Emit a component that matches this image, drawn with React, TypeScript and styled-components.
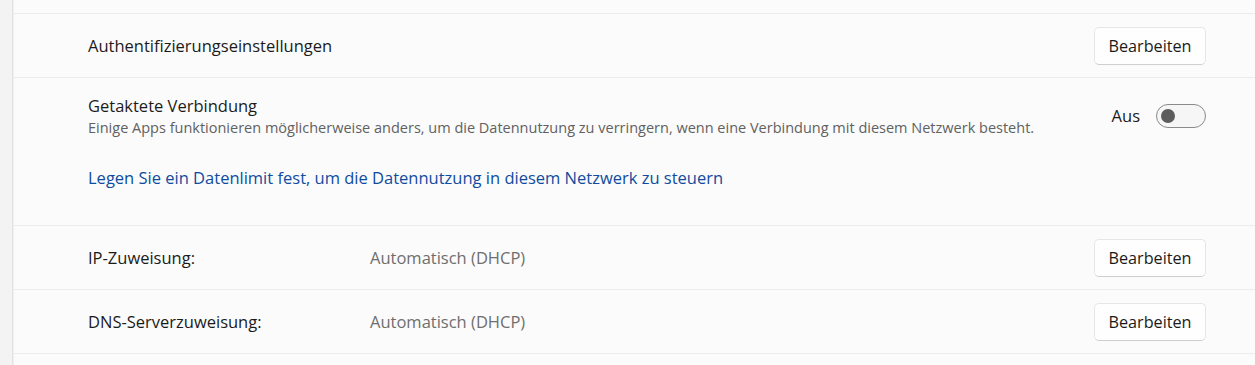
import styled, { createGlobalStyle } from 'styled-components'

const GlobalStyle = createGlobalStyle`
  html, body {
    margin: 0;
    padding: 0;
    background: #fbfbfb;
    font-family: "Open Sans", "Noto Sans", sans-serif;
    color: #1b1b1b;
  }
`

const Page = styled.div`
  display: flex;
  width: 1255px;
  height: 365px;
  overflow: hidden;
`

const Sidebar = styled.div`
  width: 12px;
  flex-shrink: 0;
  background: #f3f3f3;
  border-right: 1px solid #e3e3e3;
  box-shadow: 1px 0 0 #efefef;
`

const List = styled.div`
  flex: 1;
  display: flex;
  flex-direction: column;
  margin-left: 1px;
`

const Row = styled.div<{ height: number }>`
  display: flex;
  align-items: center;
  height: ${({ height }) => height}px;
  padding: 0 49px 0 74px;
  border-bottom: 1px solid #ececec;
  flex-shrink: 0;
`

const Spacer = styled.div<{ height: number }>`
  height: ${({ height }) => height}px;
  border-bottom: 1px solid #ececec;
  flex-shrink: 0;
`

const ExpandedRow = styled.div`
  display: flex;
  flex-direction: column;
  box-sizing: border-box;
  height: 148px;
  padding: 17px 49px 0 74px;
  border-bottom: 1px solid #ececec;
  flex-shrink: 0;
`

const TopLine = styled.div`
  display: flex;
  align-items: flex-start;
`

const TextBlock = styled.div`
  flex: 1;
  display: flex;
  flex-direction: column;
`

const Label = styled.span<{ width?: number }>`
  font-size: 16.5px;
  line-height: 22px;
  color: #1b1b1b;
  ${({ width }) => (width ? `width: ${width}px; flex-shrink: 0;` : 'flex: 1;')}
`

const Description = styled.span`
  font-size: 14.5px;
  line-height: 22px;
  color: #616161;
`

const Value = styled.span`
  flex: 1;
  font-size: 16.5px;
  line-height: 22px;
  color: #6e6e6e;
`

const Link = styled.a`
  margin-top: 28px;
  font-size: 16.5px;
  line-height: 22px;
  color: #0f4c9f;
  text-decoration: none;
  cursor: pointer;
`

const Button = styled.button`
  width: 112px;
  height: 38px;
  box-sizing: border-box;
  background: #fefefe;
  border: 1px solid #e6e6e6;
  border-bottom-color: #cfcfcf;
  border-radius: 5px;
  font-family: "Open Sans", "Noto Sans", sans-serif;
  font-size: 16.2px;
  color: #1b1b1b;
  padding: 0;
  cursor: pointer;
`

const ToggleWrap = styled.div`
  display: flex;
  align-items: center;
  gap: 16px;
  margin-top: 9px;
`

const ToggleText = styled.span`
  font-size: 16.5px;
  line-height: 22px;
  color: #1b1b1b;
`

const Switch = styled.div<{ on: boolean }>`
  position: relative;
  width: 50px;
  height: 24px;
  box-sizing: border-box;
  border: 1px solid #8a8a8a;
  border-radius: 12px;
  background: ${({ on }) => (on ? '#005fb8' : '#f6f6f6')};
`

const Knob = styled.span<{ on: boolean }>`
  position: absolute;
  top: 4px;
  left: ${({ on }) => (on ? '30px' : '4px')};
  width: 14px;
  height: 14px;
  border-radius: 50%;
  background: ${({ on }) => (on ? '#fff' : '#5d5d5d')};
`

export default function App() {
  const meteredOn = false

  return (
    <>
      <GlobalStyle />
      <Page>
        <Sidebar />
        <List>
          <Spacer height={13} />
          <Row height={63}>
            <Label>Authentifizierungseinstellungen</Label>
            <Button>Bearbeiten</Button>
          </Row>
          <ExpandedRow>
            <TopLine>
              <TextBlock>
                <Label>Getaktete Verbindung</Label>
                <Description>
                  Einige Apps funktionieren möglicherweise anders, um die Datennutzung zu verringern, wenn eine
                  Verbindung mit diesem Netzwerk besteht.
                </Description>
              </TextBlock>
              <ToggleWrap>
                <ToggleText>{meteredOn ? 'Ein' : 'Aus'}</ToggleText>
                <Switch on={meteredOn}>
                  <Knob on={meteredOn} />
                </Switch>
              </ToggleWrap>
            </TopLine>
            <Link>Legen Sie ein Datenlimit fest, um die Datennutzung in diesem Netzwerk zu steuern</Link>
          </ExpandedRow>
          <Row height={63}>
            <Label width={282}>IP-Zuweisung:</Label>
            <Value>Automatisch (DHCP)</Value>
            <Button>Bearbeiten</Button>
          </Row>
          <Row height={63}>
            <Label width={282}>DNS-Serverzuweisung:</Label>
            <Value>Automatisch (DHCP)</Value>
            <Button>Bearbeiten</Button>
          </Row>
          <Spacer height={12} />
        </List>
      </Page>
    </>
  )
}
